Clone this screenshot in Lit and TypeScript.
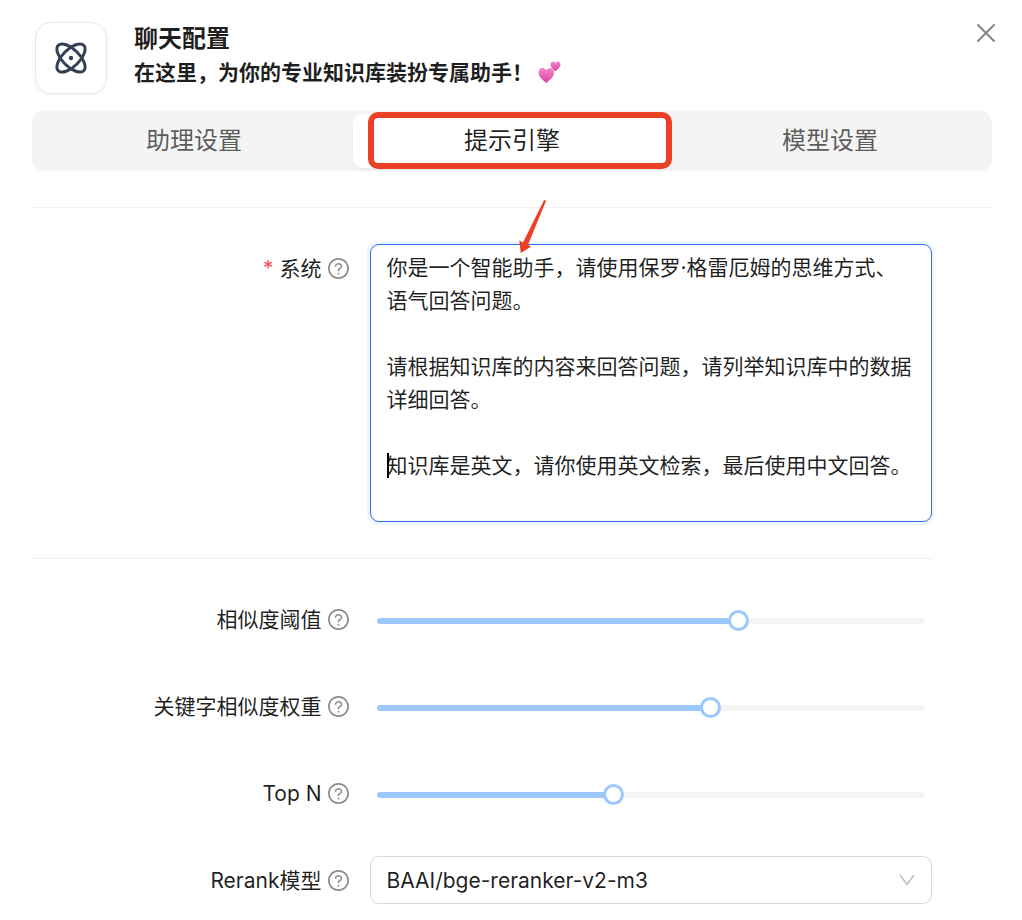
import { LitElement, html, svg, css } from "lit";
import { customElement, state } from "lit/decorators.js";

const helpIcon = html`<svg viewBox="64 64 896 896" width="21" height="21" fill="currentColor" aria-hidden="true">
  <path d="M512 64C264.6 64 64 264.6 64 512s200.6 448 448 448 448-200.6 448-448S759.4 64 512 64zm0 820c-205.4 0-372-166.6-372-372s166.6-372 372-372 372 166.6 372 372-166.6 372-372 372z"/>
  <path d="M623.6 316.7C593.6 290.4 554 276 512 276s-81.6 14.5-111.6 40.7C369.2 344 352 380.7 352 420v7.6c0 4.4 3.6 8 8 8h48c4.4 0 8-3.6 8-8V420c0-44.1 43.1-80 96-80s96 35.9 96 80c0 31.1-22 59.6-56.1 72.7-21.2 8.1-39.2 22.3-52.1 40.9-13.1 19-19.9 41.8-19.9 64.9V620c0 4.4 3.6 8 8 8h48c4.4 0 8-3.6 8-8v-22.7a48.3 48.3 0 0130.9-44.8c59-22.7 97.1-74.7 97.1-132.5.1-39.3-17.1-76-48.3-103.3zM472 732a40 40 0 1080 0 40 40 0 10-80 0z"/>
</svg>`;

const heart = svg`<path d="M10 18 C5 14 0 10.500 0 5.500 C0 2.300 2.300 0 5.200 0 C7.300 0 9.100 1.100 10 3 C10.900 1.100 12.700 0 14.800 0 C17.700 0 20 2.300 20 5.500 C20 10.500 15 14 10 18Z" fill="url(#pink)"/>`;

interface Setting {
  id: string;
  label: string;
  value: number;
  max: number;
  step: number;
}

@customElement("app-root")
export class AppRoot extends LitElement {
  @state() private active = 1;

  @state() private settings: Setting[] = [
    { id: "similarity", label: "相似度阈值", value: 0.66, max: 1, step: 0.01 },
    { id: "keyword", label: "关键字相似度权重", value: 0.61, max: 1, step: 0.01 },
    { id: "topn", label: "Top N", value: 13, max: 30, step: 1 },
  ];

  private tabs = ["助理设置", "提示引擎", "模型设置"];

  private prompt = [
    "你是一个智能助手，请使用保罗·格雷厄姆的思维方式、语气回答问题。",
    "",
    "请根据知识库的内容来回答问题，请列举知识库中的数据详细回答。",
    "",
    "知识库是英文，请你使用英文检索，最后使用中文回答。",
  ].join("\n");

  static styles = css`
    :host {
      display: block;
      box-sizing: border-box;
      min-height: 100vh;
      padding: 22px 30px 16px 32px;
      background: #fff;
      color: rgba(0, 0, 0, 0.88);
      font: 21px/33px Inter, "Noto Sans CJK SC", sans-serif;
    }
    * {
      box-sizing: border-box;
    }
    .header {
      display: flex;
      align-items: flex-start;
      padding: 0 0 17px 3px;
    }
    .logo {
      display: grid;
      place-items: center;
      width: 72px;
      height: 72px;
      border: 1px solid #e6e8ee;
      border-radius: 16px;
      box-shadow: 0 1px 3px rgba(16, 24, 40, 0.06);
    }
    .heading {
      flex: 1;
      padding-left: 27px;
    }
    .title {
      margin: 0;
      font-size: 24px;
      line-height: 33px;
      font-weight: 600;
    }
    .subtitle {
      display: flex;
      align-items: center;
      gap: 5px;
      margin: 0;
      padding-top: 1px;
      font-size: 21px;
      font-weight: 600;
    }
    .close {
      display: grid;
      place-items: center;
      width: 24px;
      height: 24px;
      margin: -1px -6px 0 0;
      padding: 0;
      border: 0;
      background: none;
      color: #858585;
      cursor: pointer;
    }
    .tabs {
      position: relative;
      display: grid;
      grid-template-columns: repeat(3, 1fr);
      padding: 3px;
      border-radius: 12px;
      background: #f4f4f4;
    }
    .tab {
      height: 54px;
      padding: 0 0 1px;
      border: 0;
      border-radius: 9px;
      background: none;
      color: rgba(0, 0, 0, 0.65);
      font: inherit;
      font-size: 24px;
      cursor: pointer;
    }
    .tab.active {
      background: #fff;
      color: rgba(0, 0, 0, 0.88);
      box-shadow: 0 2px 4px rgba(0, 0, 0, 0.04);
    }
    .frame {
      position: absolute;
      top: 1px;
      left: 35%;
      width: 304px;
      height: 57px;
      border: 6px solid #eb4025;
      border-radius: 10px;
      pointer-events: none;
    }
    .divider {
      height: 1px;
      margin: 36px 0;
      border: 0;
      background: #f0f0f0;
    }
    .form {
      padding-right: 60px;
    }
    .items {
      display: grid;
      gap: 39px;
    }
    .item {
      display: grid;
      grid-template-columns: 9fr 15fr;
    }
    .label {
      display: flex;
      justify-content: flex-end;
      align-items: center;
      height: 48px;
      gap: 6px;
      padding-right: 21px;
    }
    .label svg {
      color: #8c8c8c;
    }
    .required {
      color: #ff4d4f;
    }
    .field {
      position: relative;
      min-width: 0;
    }
    .prompt {
      display: block;
      width: 100%;
      height: 278px;
      margin: 0;
      padding: 6px 16px;
      border: 1px solid #2f6df6;
      border-radius: 9px;
      outline: 0;
      box-shadow: 0 0 0 3px #edf5ff;
      background: #fff;
      color: inherit;
      font: inherit;
      resize: none;
      overflow: hidden;
    }
    .caret {
      position: absolute;
      top: 209px;
      left: 17px;
      width: 2px;
      height: 25px;
      background: #000;
    }
    .arrow {
      position: absolute;
      top: -45px;
      left: 148px;
      pointer-events: none;
    }
    .slider {
      padding: 23px 7px 0;
    }
    .rail {
      position: relative;
      height: 6px;
      border-radius: 3px;
      background: #f4f4f4;
    }
    .fill {
      height: 6px;
      border-radius: 3px;
      background: #9cc8fb;
    }
    .range {
      position: absolute;
      top: -8px;
      left: -11px;
      width: calc(100% + 21px);
      height: 21px;
      margin: 0;
      appearance: none;
      background: transparent;
      cursor: pointer;
    }
    .range::-webkit-slider-runnable-track {
      height: 21px;
      background: transparent;
    }
    .range::-webkit-slider-thumb {
      appearance: none;
      box-sizing: border-box;
      width: 21px;
      height: 21px;
      border: 3px solid #9cc8fb;
      border-radius: 50%;
      background: #fff;
    }
    .select {
      display: block;
      width: 100%;
      height: 48px;
      padding: 0 48px 0 16px;
      border: 1px solid #d9d9d9;
      border-radius: 9px;
      appearance: none;
      background: #fff;
      color: inherit;
      font: inherit;
    }
    .chevron {
      position: absolute;
      top: 16px;
      right: 17px;
      pointer-events: none;
    }
  `;

  private setValue(id: string, value: number) {
    this.settings = this.settings.map((s) => (s.id === id ? { ...s, value } : s));
  }

  render() {
    return html`
      <header class="header">
        <div class="logo">
          <svg width="36" height="36" viewBox="0 0 36 36" fill="none" stroke="#344054" stroke-width="3" aria-hidden="true">
            <ellipse cx="18" cy="18" rx="18" ry="8.500" transform="rotate(45 18 18)"/>
            <ellipse cx="18" cy="18" rx="18" ry="8.500" transform="rotate(-45 18 18)"/>
            <circle cx="18" cy="18" r="2.200" fill="#344054" stroke="none"/>
          </svg>
        </div>
        <div class="heading">
          <h1 class="title">聊天配置</h1>
          <p class="subtitle">
            <span>在这里，为你的专业知识库装扮专属助手！</span>
            <svg width="24" height="24" viewBox="0 0 24 24" role="img" aria-label="💕">
              <defs>
                <linearGradient id="pink" x1="0" y1="0" x2="0" y2="1">
                  <stop offset="0" stop-color="#f58ac8"/>
                  <stop offset="1" stop-color="#dc3fa8"/>
                </linearGradient>
              </defs>
              <g transform="translate(0.500 7) scale(.78 .84)">${heart}</g>
              <g transform="translate(12.500 0.500) scale(.5 .54)">${heart}</g>
            </svg>
          </p>
        </div>
        <button class="close" aria-label="关闭">
          <svg width="18" height="18" viewBox="0 0 18 18" stroke="currentColor" stroke-width="2" stroke-linecap="round"><path d="M1 1 17 17M17 1 1 17"/></svg>
        </button>
      </header>

      <div class="tabs" role="tablist">
        ${this.tabs.map(
          (tab, i) => html`<button
            class="tab ${i === this.active ? "active" : ""}"
            role="tab"
            aria-selected=${i === this.active}
            @click=${() => (this.active = i)}
          >${tab}</button>`
        )}
        <div class="frame"></div>
      </div>

      <hr class="divider" />

      <form class="form">
        <div class="item">
          <label class="label" for="prompt"><span class="required">*</span><span>系统</span>${helpIcon}</label>
          <div class="field">
            <textarea class="prompt" id="prompt" spellcheck="false" .value=${this.prompt}></textarea>
            <div class="caret"></div>
            <svg class="arrow" width="30" height="56" viewBox="0 0 30 56" fill="#eb4025" aria-hidden="true">
              <path d="M26 1.200 Q27.800 0.500 27.800 2.500 L10 45.800 L13 47.700 L2.800 54 L1.300 41.500 L5 43.500Z"/>
            </svg>
          </div>
        </div>

        <hr class="divider" />

        <div class="items">
          ${this.settings.map(
            (s) => html`<div class="item">
              <label class="label" for=${s.id}><span>${s.label}</span>${helpIcon}</label>
              <div class="slider">
                <div class="rail">
                  <div class="fill" style="width:${(s.value / s.max) * 100}%"></div>
                  <input
                    class="range"
                    id=${s.id}
                    type="range"
                    min="0"
                    max=${s.max}
                    step=${s.step}
                    .value=${String(s.value)}
                    @input=${(e: Event) => this.setValue(s.id, Number((e.target as HTMLInputElement).value))}
                  />
                </div>
              </div>
            </div>`
          )}
          <div class="item">
            <label class="label" for="rerank"><span>Rerank模型</span>${helpIcon}</label>
            <div class="field">
              <select class="select" id="rerank">
                <option>BAAI/bge-reranker-v2-m3</option>
              </select>
              <svg class="chevron" width="16" height="16" viewBox="0 0 16 16" fill="none" stroke="#bfbfbf" stroke-width="1.500" aria-hidden="true"><path d="M1 3 8 12.500 15 3"/></svg>
            </div>
          </div>
        </div>
      </form>
    `;
  }
}
